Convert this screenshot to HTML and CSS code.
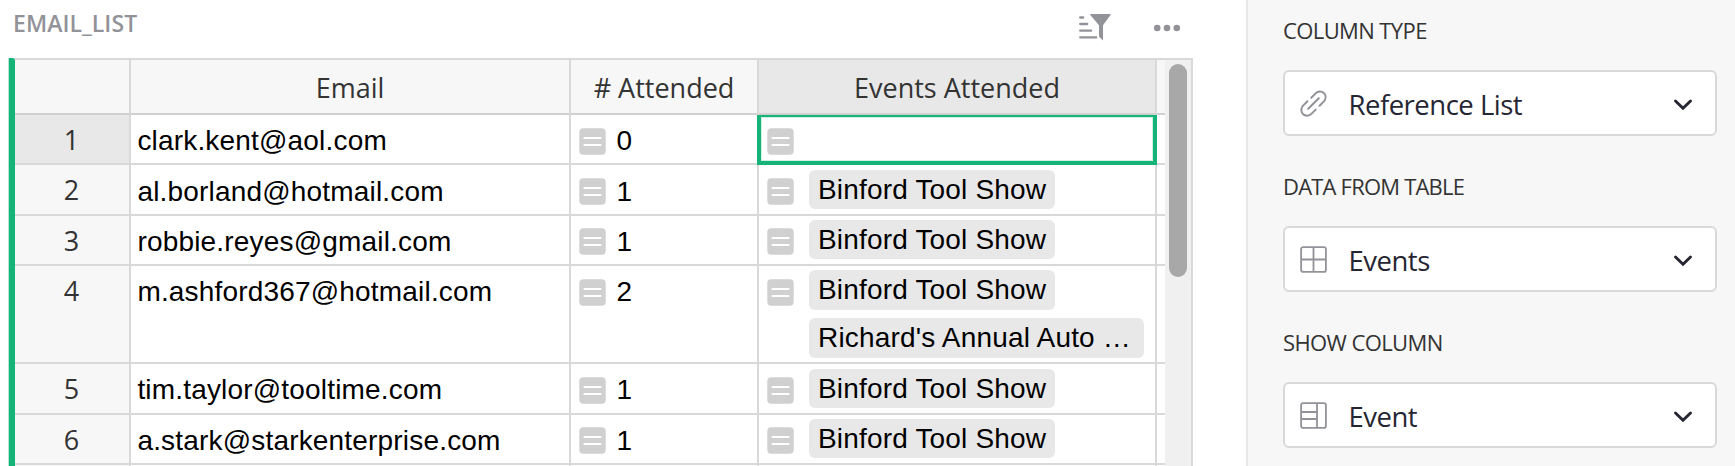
FILE: index.html
```
<!DOCTYPE html>
<html lang="en">
<head>
<meta charset="utf-8">
<title>Email_List</title>
<link rel="stylesheet" href="styles.css">
</head>
<body>
<svg class="defs" width="0" height="0">
  <symbol id="formula" viewBox="0 0 27 27">
    <rect x=".3" y=".3" width="26.4" height="26.4" rx="4" fill="#d0d0d0"/>
    <path d="M5.5 10h16M5.5 17h16" stroke="#fff" stroke-width="2.2" stroke-linecap="round"/>
  </symbol>
  <symbol id="chevron" viewBox="0 0 20 14">
    <path d="M2.5 3L10 10.3L17.5 3" fill="none" stroke="#262633" stroke-width="2.9" stroke-linecap="round"/>
  </symbol>
</svg>
<div class="app">
  <main class="view">
    <header class="bar">
      <h1 class="title">EMAIL_LIST</h1>
      <svg class="filter" width="34" height="30" viewBox="0 0 34 30">
        <path d="M2.2 5.5h3M2.2 12h7M2.2 18.7h11M2.2 25.4h16" stroke="#929299" stroke-width="2.3" stroke-linecap="round"/>
        <path d="M12.6 2H32.2Q33 2 32.5 3L25 13.2V28.6L21 24.6V13.2L12.3 3Q12 2 12.6 2Z" fill="#929299"/>
      </svg>
      <svg class="dots" width="28" height="10" viewBox="0 0 28 10">
        <g fill="#929299"><circle cx="4.2" cy="5" r="3.3"/><circle cx="14" cy="5" r="3.3"/><circle cx="23.8" cy="5" r="3.3"/></g>
      </svg>
    </header>
    <section class="panel">
      <div class="accent"></div>
      <div class="grid">
        <div class="row head">
          <div class="cell num"></div>
          <div class="cell">Email</div>
          <div class="cell"># Attended</div>
          <div class="cell on">Events Attended</div>
          <div class="cell rest"></div>
        </div>
        <div class="row r1">
          <div class="cell num on">1</div>
          <div class="cell text">clark.kent@aol.com</div>
          <div class="cell calc"><svg class="eq"><use href="#formula"/></svg>0</div>
          <div class="cell calc cursor"><svg class="eq"><use href="#formula"/></svg></div>
          <div class="cell rest"></div>
        </div>
        <div class="row r2">
          <div class="cell num">2</div>
          <div class="cell text">al.borland@hotmail.com</div>
          <div class="cell calc"><svg class="eq"><use href="#formula"/></svg>1</div>
          <div class="cell calc"><svg class="eq"><use href="#formula"/></svg><div class="tags"><span class="tag">Binford Tool Show</span></div></div>
          <div class="cell rest"></div>
        </div>
        <div class="row r3 high">
          <div class="cell num">3</div>
          <div class="cell text">robbie.reyes@gmail.com</div>
          <div class="cell calc"><svg class="eq"><use href="#formula"/></svg>1</div>
          <div class="cell calc"><svg class="eq"><use href="#formula"/></svg><div class="tags"><span class="tag">Binford Tool Show</span></div></div>
          <div class="cell rest"></div>
        </div>
        <div class="row r4">
          <div class="cell num">4</div>
          <div class="cell text">m.ashford367@hotmail.com</div>
          <div class="cell calc"><svg class="eq"><use href="#formula"/></svg>2</div>
          <div class="cell calc"><svg class="eq"><use href="#formula"/></svg><div class="tags"><span class="tag big">Binford Tool Show</span><span class="tag big wide">Richard's Annual Auto …</span></div></div>
          <div class="cell rest"></div>
        </div>
        <div class="row r5">
          <div class="cell num">5</div>
          <div class="cell text">tim.taylor@tooltime.com</div>
          <div class="cell calc"><svg class="eq"><use href="#formula"/></svg>1</div>
          <div class="cell calc"><svg class="eq"><use href="#formula"/></svg><div class="tags"><span class="tag">Binford Tool Show</span></div></div>
          <div class="cell rest"></div>
        </div>
        <div class="row r6 high">
          <div class="cell num">6</div>
          <div class="cell text">a.stark@starkenterprise.com</div>
          <div class="cell calc"><svg class="eq"><use href="#formula"/></svg>1</div>
          <div class="cell calc"><svg class="eq"><use href="#formula"/></svg><div class="tags"><span class="tag">Binford Tool Show</span></div></div>
          <div class="cell rest"></div>
        </div>
        <div class="row r7">
          <div class="cell num"></div>
          <div class="cell"></div>
          <div class="cell"></div>
          <div class="cell"></div>
          <div class="cell rest"></div>
        </div>
      </div>
      <div class="scroll"><div class="thumb"></div></div>
    </section>
  </main>
  <aside class="side">
    <div class="field">
      <div class="label">COLUMN TYPE</div>
      <div class="select">
        <svg class="icon" viewBox="0 0 27 27" fill="none" stroke="#929299" stroke-width="2" stroke-linecap="round">
          <path d="M8.2 18.8L18.8 8.2M11.3 7.7L15.6 3.4A6.2 6.2 0 0 1 24.1 3.2A6.2 6.2 0 0 1 23.9 11.4L19.6 15.7M7.4 11.3L3.1 15.6A6.2 6.2 0 0 0 2.9 24.1A6.2 6.2 0 0 0 11.4 23.9L15.7 19.6"/>
        </svg>
        <span class="value">Reference List</span>
        <svg class="chev"><use href="#chevron"/></svg>
      </div>
    </div>
    <div class="field">
      <div class="label tight">DATA FROM TABLE</div>
      <div class="select">
        <svg class="icon" viewBox="0 0 27 27" fill="none" stroke="#929299" stroke-width="1.8">
          <rect x="1.1" y="1.1" width="24.8" height="24.8" rx="2"/><path d="M13.5 1v25M1 13.5h25"/>
        </svg>
        <span class="value">Events</span>
        <svg class="chev"><use href="#chevron"/></svg>
      </div>
    </div>
    <div class="field">
      <div class="label">SHOW COLUMN</div>
      <div class="select">
        <svg class="icon" viewBox="0 0 27 27" fill="none" stroke="#929299" stroke-width="1.8">
          <rect x="1.1" y="1.1" width="24.8" height="24.8" rx="2"/><path d="M17 1v25M1 10h16M1 17h16"/>
        </svg>
        <span class="value">Event</span>
        <svg class="chev"><use href="#chevron"/></svg>
      </div>
    </div>
  </aside>
</div>
</body>
</html>
```
FILE: styles.css
```
* { box-sizing: border-box; }
body { margin: 0; background: #fff; overflow: hidden; font-family: "Open Sans", "Noto Sans", sans-serif; color: #333; }
.defs { display: block; }
.app { display: flex; width: 1735px; height: 466px; overflow: hidden; }
.view { width: 1246px; height: 466px; padding-left: 8px; flex: none; }

.bar { display: flex; height: 58px; padding-left: 5px; align-items: flex-start; }
.title { margin: 0; width: 1065px; font-size: 23px; font-weight: 600; line-height: 46px; letter-spacing: .05px; color: #929299; }
.filter { margin-top: 12px; flex: none; }
.dots { margin: 22.5px 0 0 41.3px; flex: none; }

.panel { display: flex; width: 1185px; height: 408px; border-top: 2px solid #d9d9d9; border-right: 2px solid #d9d9d9; }
.accent { width: 7px; height: 408px; margin-top: -2px; background: #16b378; border-left: 1px solid #b5e5d3; border-top-right-radius: 3px; flex: none; }
.grid { width: 1150px; flex: none; }
.row { display: grid; grid-template-columns: 116px 440px 188px 398px 8px; grid-template-rows: 100%; }
.cell { border-right: 2px solid #d9d9d9; border-bottom: 2px solid #d9d9d9; white-space: nowrap; min-width: 0; }
.cell.rest { border-right: 0; }
.head { height: 55px; }
.head .cell { padding-top: 2px; background: #f7f7f7; text-align: center; font-size: 27px; line-height: 52px; border-bottom-color: #d0d0d0; }
.head .cell.on, .num.on { background: #e8e8e8; }
.num { background: #f7f7f7; text-align: center; padding-right: 1px; font-size: 27px; line-height: 50px; color: #333; }
.text, .calc { font-family: "Liberation Sans", Arial, sans-serif; font-size: 28px; line-height: 51px; letter-spacing: .18px; color: #000; }
.text { padding-left: 6.4px; }
.calc { display: flex; align-items: flex-start; padding-left: 8px; }
.eq { width: 27px; height: 27px; margin: 13px 10.5px 0 0; flex: none; }
.high .eq { margin-top: 12px; }
.cursor { border: 4px solid #16b378; border-top-width: 2px; margin-left: -2px; padding-left: 6px; box-shadow: inset 0 0 0 1px #d0f0e4; }
.cursor .eq { margin-top: 11px; }
.r1, .r3, .r6 { height: 50px; }
.r2, .r5 { height: 51px; }
.r4 { height: 98px; }
.r7 { height: 60px; }
.r2 .text, .r2 .calc { line-height: 53px; }

.tags { display: flex; flex-direction: column; align-items: flex-start; gap: 8px; padding: 5px 0 0 4.5px; }
.high .tags, .r4 .tags { padding-top: 4px; }
.tag { height: 39px; padding: 0 9px; border-radius: 6px; background: #e8e8e8; line-height: 39px; }
.tag.big { height: 40px; }
.tag.wide { width: 335px; line-height: 40px; }

.scroll { width: 26px; padding: 4px 4px 0; background: #f0f0f0; flex: none; }
.thumb { width: 18px; height: 213px; border-radius: 9px; background: #a8a8a8; }

.side { width: 489px; height: 466px; background: #f7f7f7; border-left: 2px solid #e8e8e8; padding: 0 18px 0 35px; flex: none; }
.field { height: 156px; }
.label { height: 70px; font-size: 22px; line-height: 60px; letter-spacing: -.6px; color: #333; white-space: nowrap; }
.label.tight { letter-spacing: -.8px; }
.select { display: flex; align-items: center; height: 66px; padding: 0 22px 0 15px; background: #fff; border: 2px solid #d9d9d9; border-radius: 6px; }
.icon { width: 27px; height: 27px; flex: none; }
.value { margin-left: 21.5px; padding-top: 4px; flex: 1; font-size: 27.5px; line-height: 58px; letter-spacing: -.5px; color: #262633; }
.chev { width: 20px; height: 14px; margin-top: 4px; flex: none; }
```
